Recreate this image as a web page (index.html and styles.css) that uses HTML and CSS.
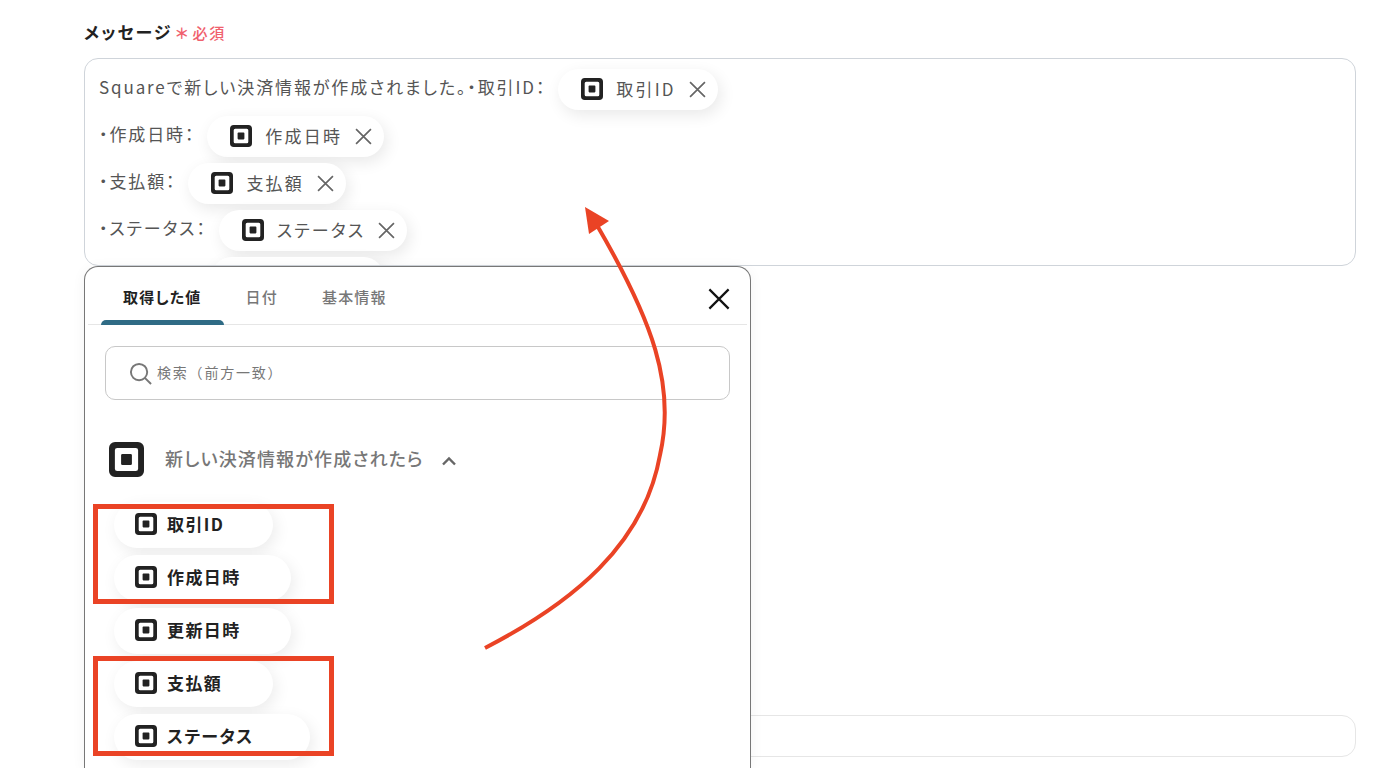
FILE: index.html
```html
<!DOCTYPE HTML>
<html lang="ja">
<head>
  <meta name="viewport" content="width=device-width, initial-scale=1">
  <title>メッセージ</title>
  <link rel="stylesheet" href="styles.css">
</head>
<body>
  <svg class="defs" width="0" height="0" aria-hidden="true">
    <symbol id="square" viewBox="0 0 22 22">
      <path fill-rule="evenodd" d="M3.8 0h14.4A3.8 3.8 0 0 1 22 3.8v14.4a3.8 3.8 0 0 1-3.8 3.8H3.8A3.8 3.8 0 0 1 0 18.200V3.800A3.800 3.800 0 0 1 3.800 0zM5.200 3.700A1.500 1.500 0 0 0 3.700 5.200v11.600a1.500 1.500 0 0 0 1.500 1.500h11.600a1.500 1.500 0 0 0 1.500-1.500V5.200a1.500 1.500 0 0 0-1.500-1.500z"/>
      <rect x="7.600" y="7.600" width="6.800" height="6.800" rx="0.800"/>
    </symbol>
    <symbol id="cross" viewBox="0 0 16 16">
      <path d="M1 1l14 14M15 1L1 15" fill="none" stroke="currentColor" stroke-width="1.600"/>
    </symbol>
  </svg>

  <div class="field-label">
    <span class="label-text">メッセージ</span>
    <span class="required"><span class="mark">＊</span>必須</span>
  </div>

  <div class="message-box">
    <div class="line">
      <span class="line-text">Squareで新しい決済情報が作成されました。・取引ID：</span>
      <span class="tag"><svg class="sq"><use href="#square"/></svg>取引ID<svg class="x"><use href="#cross"/></svg></span>
    </div>
    <div class="line">
      <span class="line-text">・作成日時：</span>
      <span class="tag"><svg class="sq"><use href="#square"/></svg>作成日時<svg class="x"><use href="#cross"/></svg></span>
    </div>
    <div class="line">
      <span class="line-text">・支払額：</span>
      <span class="tag"><svg class="sq"><use href="#square"/></svg>支払額<svg class="x"><use href="#cross"/></svg></span>
    </div>
    <div class="line">
      <span class="line-text">・ステータス：</span>
      <span class="tag"><svg class="sq"><use href="#square"/></svg>ステータス<svg class="x"><use href="#cross"/></svg></span>
    </div>
    <!-- fifth tag sits behind the picker, only its top edge shows -->
    <div class="line">
      <span class="tag tag-hidden"></span>
    </div>
  </div>

  <div class="next-input"></div>

  <div class="picker">
    <div class="tabs">
      <div class="tab active">取得した値</div>
      <div class="tab">日付</div>
      <div class="tab">基本情報</div>
      <svg class="picker-close"><use href="#cross"/></svg>
    </div>
    <div class="search">
      <svg class="search-icon" viewBox="0 0 24 24">
        <circle cx="10.500" cy="10.500" r="8.500" fill="none" stroke="currentColor" stroke-width="2"/>
        <path d="M16.500 16.500L23 23" fill="none" stroke="currentColor" stroke-width="2"/>
      </svg>
      <span>検索（前方一致）</span>
    </div>
    <div class="group-head">
      <svg class="group-icon"><use href="#square"/></svg>
      <span>新しい決済情報が作成されたら</span>
      <svg class="chevron" viewBox="0 0 16 10">
        <path d="M2 8.500L8 2.500l6 6" fill="none" stroke="currentColor" stroke-width="2.400"/>
      </svg>
    </div>
    <div class="value-list">
      <div class="value w1"><svg class="sq"><use href="#square"/></svg>取引ID</div>
      <div class="value w2"><svg class="sq"><use href="#square"/></svg>作成日時</div>
      <div class="value w2"><svg class="sq"><use href="#square"/></svg>更新日時</div>
      <div class="value w1"><svg class="sq"><use href="#square"/></svg>支払額</div>
      <div class="value w3"><svg class="sq"><use href="#square"/></svg>ステータス</div>
    </div>
  </div>

  <!-- annotation layer -->
  <div class="hl hl-top"></div>
  <div class="hl hl-bottom"></div>
  <svg class="arrow" width="1384" height="768" viewBox="0 0 1384 768">
    <path d="M485 648C572 603 644 545 660 455C676 385 652 320 598 227" fill="none" stroke="#ea4325" stroke-width="4"/>
    <polygon points="585,207 609,221 589,234" fill="#ea4325"/>
  </svg>
</body>
</html>
```

FILE: styles.css
```css
/* Global Styles */
:root {
  --text-color: #222;
  --muted: #777;
  --line: #e6e6e6;
  --red: #ea4325;
}

html, body {
  height: 768px;
  overflow: hidden;
}

body {
  position: relative;
  margin: 0;
  padding: 21px 28px 0 84px;
  box-sizing: border-box;
  background: #fff;
  color: var(--text-color);
  font-family: "Noto Sans CJK JP", "Inter", sans-serif;
  font-feature-settings: "palt";
}

.defs {
  position: absolute;
}

/* Field label */
.field-label {
  display: flex;
  align-items: center;
  height: 22px;
  margin-bottom: 15px;
}

.label-text {
  font-size: 17px;
  font-weight: 700;
  letter-spacing: 2px;
  padding-bottom: 1px;
}

.required {
  display: flex;
  align-items: center;
  margin-left: 3px;
  color: #f0616d;
  font-size: 15px;
  font-weight: 500;
  letter-spacing: 1.700px;
}

.mark {
  margin-right: 3px;
  font-weight: 700;
}

/* Message box */
.message-box {
  box-sizing: border-box;
  height: 208px;
  padding: 10px 14px 0;
  border: 1px solid #cfd4da;
  border-radius: 14px;
  overflow: hidden;
}

.line {
  display: flex;
  align-items: center;
  height: 41px;
  margin-bottom: 6px;
  color: #555;
  font-size: 17px;
}

.line-text {
  padding-bottom: 6px;
  letter-spacing: 1.880px;
}

.tag {
  display: inline-flex;
  align-items: center;
  flex: none;
  box-sizing: border-box;
  height: 41px;
  margin-left: 12px;
  padding: 0 12px 3px 23px;
  border-radius: 21px;
  background: #fff;
  box-shadow: 3px 5px 16px rgba(0, 0, 0, 0.09);
  font-size: 17px;
  letter-spacing: 2.200px;
}

.tag-hidden {
  width: 173px;
  margin-left: 112px;
}

.sq {
  flex: none;
  width: 22px;
  height: 22px;
  margin-right: 13px;
  fill: #222;
}

.tag .sq, .tag .x {
  position: relative;
  top: 1px;
}

.x {
  flex: none;
  width: 17px;
  height: 17px;
  margin-left: 13px;
  color: #666;
}

.next-input {
  box-sizing: border-box;
  height: 42px;
  margin-top: 449px;
  border: 1px solid var(--line);
  border-radius: 14px;
}

/* Value picker */
.picker {
  position: absolute;
  left: 84px;
  top: 266px;
  box-sizing: border-box;
  width: 667px;
  height: 502px;
  padding: 0 3px;
  background: #fff;
  border: 1px solid #777;
  border-bottom: none;
  border-radius: 14px 14px 0 0;
  box-shadow: 0 2px 14px rgba(0, 0, 0, 0.05);
}

.tabs {
  position: relative;
  display: flex;
  height: 57px;
  border-bottom: 1px solid var(--line);
}

.tab {
  position: relative;
  padding: 19px 22px 0;
  color: var(--muted);
  font-size: 15px;
  font-weight: 500;
  letter-spacing: 1.200px;
}

.tab:first-child {
  margin-left: 13px;
}

.tab.active {
  color: var(--text-color);
  font-weight: 700;
}

.tab.active::after {
  content: "";
  position: absolute;
  left: 0;
  right: 0;
  bottom: -1px;
  height: 5px;
  border-radius: 5px 5px 0 0;
  background: #2f6b85;
}

.picker-close {
  position: absolute;
  right: 17px;
  top: 21px;
  width: 22px;
  height: 22px;
  color: #111;
}

.search {
  display: flex;
  align-items: center;
  box-sizing: border-box;
  height: 54px;
  margin: 21px 17px 0;
  padding-left: 23px;
  border: 1px solid #c8c8c8;
  border-radius: 10px;
  color: var(--muted);
  font-size: 14px;
  font-feature-settings: normal;
  letter-spacing: 1.800px;
}

.search span {
  padding-bottom: 2px;
}

.search-icon {
  width: 23px;
  height: 23px;
  margin-right: 5px;
}

.group-head {
  display: flex;
  align-items: center;
  height: 36px;
  margin: 41px 0 0 21px;
  color: var(--muted);
  font-size: 18px;
  font-weight: 500;
  letter-spacing: 1.150px;
}

.group-head span {
  padding-bottom: 2px;
}

.group-icon {
  width: 35px;
  height: 35px;
  margin-right: 21px;
  fill: #222;
}

.chevron {
  width: 16px;
  height: 10px;
  margin-left: 17px;
  margin-top: 3px;
  color: #666;
}

.value-list {
  display: flex;
  flex-direction: column;
  align-items: flex-start;
  gap: 7px;
  margin: 25px 0 0 26px;
}

.value {
  display: flex;
  align-items: center;
  box-sizing: border-box;
  height: 46px;
  padding: 0 0 3px 21px;
  border-radius: 23px;
  background: #fff;
  box-shadow: 3px 5px 16px rgba(0, 0, 0, 0.08);
  font-size: 17px;
  font-weight: 700;
  letter-spacing: 1.400px;
}

.value .sq {
  margin-right: 10px;
}

.w1 { width: 159px; }
.w2 { width: 177px; }
.w3 { width: 196px; }

/* Annotations */
.hl {
  position: absolute;
  left: 93px;
  box-sizing: border-box;
  width: 241px;
  height: 100px;
  border: 5px solid var(--red);
}

.hl-top { top: 504px; }
.hl-bottom { top: 656px; }

.arrow {
  position: absolute;
  left: 0;
  top: 0;
}
```
